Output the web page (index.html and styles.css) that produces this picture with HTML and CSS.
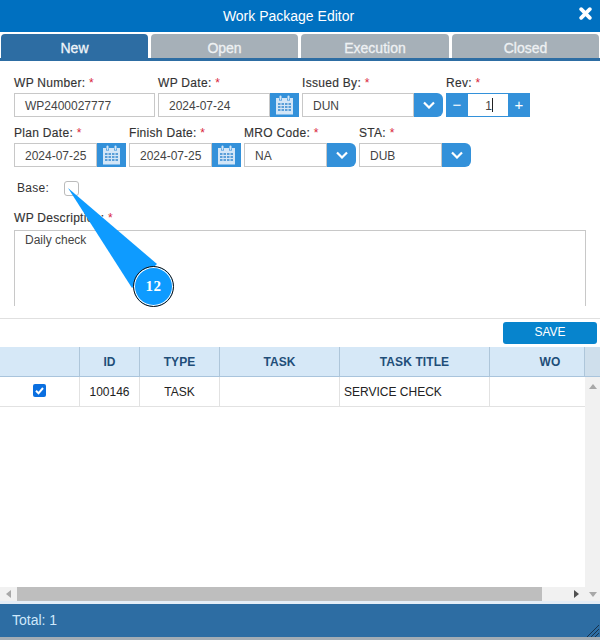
FILE: index.html
```html
<!DOCTYPE html>
<html lang="en">
<head>
<meta charset="utf-8">
<title>Work Package Editor</title>
<link rel="stylesheet" href="styles.css">
</head>
<body>
<svg class="defs" width="0" height="0" aria-hidden="true">
  <symbol id="cal" viewBox="0 0 19 20">
    <path fill="#d3e6f7" d="M1 3h3v2.500h3V3h5v2.500h3V3h3v16.500H1z"/>
    <rect x="4.500" y="0.500" width="2" height="4.500" rx="1" fill="#d3e6f7"/>
    <rect x="12.500" y="0.500" width="2" height="4.500" rx="1" fill="#d3e6f7"/>
    <path fill="#5b9fd8" d="M3 8h2.500v2H3zm3.500 0H9v2H6.500zm3.500 0h2.500v2H10zm3.500 0H16v2h-2.500zM3 11h2.500v2H3zm3.500 0H9v2H6.500zm3.500 0h2.500v2H10zm3.500 0H16v2h-2.500zM3 14h2.500v2H3zm3.500 0H9v2H6.500zm3.500 0h2.500v2H10zm3.500 0H16v2h-2.500z"/>
  </symbol>
  <symbol id="chev" viewBox="0 0 12 8">
    <path fill="none" stroke="#fff" stroke-width="2.200" d="M1 1.500l5 5 5-5"/>
  </symbol>
</svg>

<header class="title-bar">
  <span class="title">Work Package Editor</span>
  <svg class="close" viewBox="0 0 12 12" aria-label="Close"><path fill="none" stroke="#fff" stroke-width="3.400" stroke-linecap="round" d="M2 2l8 8M10 2l-8 8"/></svg>
</header>

<nav class="tabs">
  <div class="tab tab-active">New</div>
  <div class="tab tab-open">Open</div>
  <div class="tab tab-exec">Execution</div>
  <div class="tab tab-closed">Closed</div>
</nav>

<form class="form">
  <div class="row row-1">
    <div class="field">
      <label class="lbl">WP Number: <em>*</em></label>
      <div class="control"><span class="input w-141">WP2400027777</span></div>
    </div>
    <div class="field">
      <label class="lbl">WP Date: <em>*</em></label>
      <div class="control"><span class="input w-112">2024-07-24</span><span class="addon"><svg class="cal"><use href="#cal"/></svg></span></div>
    </div>
    <div class="field">
      <label class="lbl">Issued By: <em>*</em></label>
      <div class="control"><span class="input w-112">DUN</span><span class="addon addon-round"><svg class="chev"><use href="#chev"/></svg></span></div>
    </div>
    <div class="field">
      <label class="lbl">Rev: <em>*</em></label>
      <div class="control stepper"><span class="step">&minus;</span><span class="step-val">1<i class="caret"></i></span><span class="step">+</span></div>
    </div>
  </div>

  <div class="row row-2">
    <div class="field">
      <label class="lbl">Plan Date: <em>*</em></label>
      <div class="control"><span class="input w-83">2024-07-25</span><span class="addon"><svg class="cal"><use href="#cal"/></svg></span></div>
    </div>
    <div class="field">
      <label class="lbl">Finish Date: <em>*</em></label>
      <div class="control"><span class="input w-83">2024-07-25</span><span class="addon"><svg class="cal"><use href="#cal"/></svg></span></div>
    </div>
    <div class="field">
      <label class="lbl">MRO Code: <em>*</em></label>
      <div class="control"><span class="input w-83">NA</span><span class="addon addon-round"><svg class="chev"><use href="#chev"/></svg></span></div>
    </div>
    <div class="field">
      <label class="lbl">STA: <em>*</em></label>
      <div class="control"><span class="input w-83">DUB</span><span class="addon addon-round"><svg class="chev"><use href="#chev"/></svg></span></div>
    </div>
  </div>

  <div class="base-row">
    <span class="base-lbl">Base:</span>
    <span class="check-empty"></span>
  </div>

  <label class="lbl desc-lbl">WP Description: <em>*</em></label>
  <div class="textarea">Daily check</div>
</form>

<div class="actions">
  <button class="save" type="button">SAVE</button>
</div>

<section class="grid">
  <div class="grid-head">
    <div class="hc c-sel"></div>
    <div class="hc c-id">ID</div>
    <div class="hc c-type">TYPE</div>
    <div class="hc c-task">TASK</div>
    <div class="hc c-title">TASK TITLE</div>
    <div class="hc c-wo">WO</div>
    <div class="hc c-end"></div>
  </div>
  <div class="grid-main">
    <div class="grid-body">
      <div class="grid-row">
        <div class="bc c-sel"><span class="check-on"><svg viewBox="0 0 13 13"><path fill="none" stroke="#fff" stroke-width="2" d="M3 6.800l2.500 2.500L10 4"/></svg></span></div>
        <div class="bc c-id">100146</div>
        <div class="bc c-type">TASK</div>
        <div class="bc c-task"></div>
        <div class="bc c-title left">SERVICE CHECK</div>
        <div class="bc c-wo"></div>
      </div>
    </div>
    <div class="vbar"><i class="arrow arrow-up"></i></div>
  </div>
  <div class="hbar">
    <span class="hbar-btn"><i class="arrow arrow-left"></i></span>
    <span class="hbar-track"><span class="hbar-thumb"></span></span>
    <span class="hbar-btn"><i class="arrow arrow-right"></i></span>
    <span class="hbar-corner"><i class="arrow arrow-down"></i></span>
  </div>
</section>

<footer class="footer">
  <span>Total: 1</span>
  <svg class="grip" viewBox="0 0 12 12"><path stroke="#16324d" stroke-width="1" d="M0 12L12 0M4 12l8-8M8 12l4-4"/></svg>
</footer>

<svg class="callout-tail" viewBox="0 0 600 640" aria-hidden="true"><path fill="#0e9bff" d="M68 188L157 264 132 288z"/></svg>
<div class="callout-badge">12</div>
</body>
</html>
```
FILE: styles.css
```css
* { box-sizing: border-box; }

html, body {
  margin: 0;
  width: 600px;
  height: 640px;
  overflow: hidden;
  background: #fff;
  font-family: "Liberation Sans", Arial, sans-serif;
  color: #333;
}

body { position: relative; }

.defs { position: absolute; }

.title-bar {
  height: 32px;
  background: #0070c0;
  display: flex;
  align-items: center;
  justify-content: center;
  position: relative;
  color: #fff;
  font-size: 14px;
  padding: 0 23px 1px 0;
}

.close {
  position: absolute;
  top: 7px;
  right: 8px;
  width: 13px;
  height: 13px;
}

.tabs {
  display: flex;
  height: 27px;
  margin-top: 2px;
  padding-left: 1px;
  border-bottom: 3px solid #2d6da3;
}

.tab {
  height: 24px;
  background: #a6b0b8;
  color: #eef1f3;
  border-radius: 4px 4px 0 0;
  font-size: 14px;
  font-weight: 400;
  -webkit-text-stroke: 0.3px currentColor;
  display: flex;
  align-items: center;
  justify-content: center;
  padding-top: 4px;
  margin-right: 3px;
}

.tab-active {
  width: 147px;
  background: #2d6da3;
  color: #f0f5f9;
}
.tab-open { width: 147px; }
.tab-exec { width: 148px; }
.tab-closed { width: 147px; margin-right: 0; }

.form { padding: 14px 0 0 14px; height: 257px; }

.row { display: flex; gap: 3px; }
.row-2 { margin-top: 8px; }

.field { display: flex; flex-direction: column; }

.lbl {
  display: block;
  height: 18px;
  font-size: 12px;
  line-height: 17px;
  letter-spacing: 0.3px;
  color: #333;
  -webkit-text-stroke: 0.15px #333;
}

.lbl em {
  color: #d9253b;
  font-style: normal;
  -webkit-text-stroke: 0;
}

.control { display: flex; height: 24px; }

.input {
  display: block;
  height: 24px;
  border: 1px solid #c8c8c8;
  padding-left: 10px;
  font-size: 12px;
  line-height: 24px;
  color: #444;
}

.w-141 { width: 141px; }
.w-112 { width: 112px; }
.w-83 { width: 83px; }

.addon {
  width: 29px;
  height: 24px;
  background: #3391da;
  display: flex;
  align-items: center;
  justify-content: center;
}

.addon-round { border-radius: 0 6px 6px 0; }

.cal { width: 19px; height: 20px; }
.chev { width: 12px; height: 8px; }

.stepper { width: 84px; background: #3391da; }

.step {
  width: 22px;
  color: #fff;
  font-size: 15px;
  line-height: 24px;
  text-align: center;
}

.step-val {
  width: 40px;
  margin: 1px 0;
  background: #fff;
  font-size: 12px;
  line-height: 24px;
  text-align: right;
  padding-right: 16px;
  position: relative;
  color: #444;
}

.caret {
  position: absolute;
  right: 15px;
  top: 4px;
  width: 1px;
  height: 14px;
  background: #222;
}

.base-row {
  display: flex;
  align-items: center;
  height: 16px;
  margin-top: 13px;
  padding-left: 3px;
  font-size: 12px;
  letter-spacing: 0.3px;
  color: #333;
}

.base-lbl { width: 47px; }

.check-empty {
  width: 15px;
  height: 15px;
  border: 1px solid #bbb;
  border-radius: 3px;
  background: #fff;
}

.desc-lbl { margin-top: 14px; height: 20px; }

.textarea {
  width: 572px;
  height: 76px;
  border: 1px solid #c8c8c8;
  border-bottom: 0;
  padding: 2px 10px;
  font-size: 12px;
  line-height: 14px;
  color: #444;
}

.actions {
  height: 29px;
  border-top: 1px solid #e0e0e0;
  display: flex;
  justify-content: flex-end;
  padding: 3px 3px 0 0;
}

.save {
  width: 94px;
  height: 22px;
  border: 0;
  border-radius: 3px;
  background: #0784cd;
  color: #fff;
  font-family: inherit;
  font-size: 12px;
  line-height: 18px;
  padding: 0 0 2px;
}

.grid {
  width: 600px;
  padding-bottom: 3px;
  background: #e4edf6;
}

.grid-head {
  display: flex;
  height: 30px;
  background: #d6e8f7;
  border-bottom: 1px solid #a9c4dc;
}

.hc {
  height: 29px;
  border-right: 1px solid #aec6da;
  color: #1f4e79;
  font-size: 12px;
  font-weight: 700;
  line-height: 30px;
  letter-spacing: 0.1px;
  text-align: center;
}

.hc.c-wo { padding-left: 26px; }

.c-sel { width: 80px; }
.c-id { width: 60px; }
.c-type { width: 80px; }
.c-task { width: 120px; }
.c-title { width: 150px; }
.c-wo { width: 95px; }
.c-end { width: 15px; background: #cfdfec; border-right: 0; }

.grid-main { display: flex; height: 210px; background: #fff; }

.grid-body { width: 585px; }

.grid-row {
  display: flex;
  height: 30px;
  border-bottom: 1px solid #e2e2e2;
}

.bc {
  height: 29px;
  border-right: 1px solid #e2e2e2;
  color: #222;
  font-size: 12px;
  line-height: 31px;
  text-align: center;
}

.c-sel.bc { display: flex; align-items: center; justify-content: center; padding-bottom: 3px; }
.bc.c-wo { border-right: 0; }
.left { text-align: left; padding-left: 4px; }

.check-on {
  width: 13px;
  height: 13px;
  border-radius: 2px;
  background: #0a6fe0;
  display: block;
}
.check-on svg { display: block; width: 13px; height: 13px; }

.vbar {
  width: 15px;
  background: #f1f1f1;
  display: flex;
  justify-content: center;
  padding-top: 7px;
}

.arrow { display: block; width: 0; height: 0; border-style: solid; border-color: transparent; }
.arrow-up { border-width: 0 4px 5px; border-bottom-color: #a8a8a8; }
.arrow-down { border-width: 5px 4px 0; border-top-color: #a8a8a8; }
.arrow-left { border-width: 4px 5px 4px 0; border-right-color: #a8a8a8; }
.arrow-right { border-width: 4px 0 4px 5px; border-left-color: #505050; }

.hbar {
  display: flex;
  height: 14px;
  background: #f1f1f1;
  align-items: center;
}

.hbar-btn {
  width: 17px;
  height: 14px;
  display: flex;
  align-items: center;
  justify-content: center;
}

.hbar-track { flex: 1; height: 14px; display: block; }
.hbar-thumb { display: block; width: 525px; height: 14px; background: #bebebe; }
.hbar-corner { width: 15px; display: flex; justify-content: center; }

.footer {
  height: 36px;
  background: #2d6da3;
  border-bottom: 3px solid #a3adb5;
  color: #cfe8fb;
  font-size: 14px;
  line-height: 33px;
  padding-left: 12px;
  position: relative;
}

.grip {
  position: absolute;
  right: 1px;
  bottom: 0;
  width: 12px;
  height: 12px;
}

.callout-tail {
  position: absolute;
  left: 0;
  top: 0;
  width: 600px;
  height: 640px;
  pointer-events: none;
}

.callout-badge {
  position: absolute;
  left: 133px;
  top: 266px;
  width: 41px;
  height: 41px;
  border-radius: 50%;
  background: #0e9bff;
  border: 1px solid #111;
  box-shadow: inset 0 0 0 1px #fff;
  color: #fff;
  font-family: "Liberation Serif", serif;
  font-size: 15px;
  font-weight: 700;
  letter-spacing: 0.5px;
  line-height: 39px;
  text-align: center;
}
```
